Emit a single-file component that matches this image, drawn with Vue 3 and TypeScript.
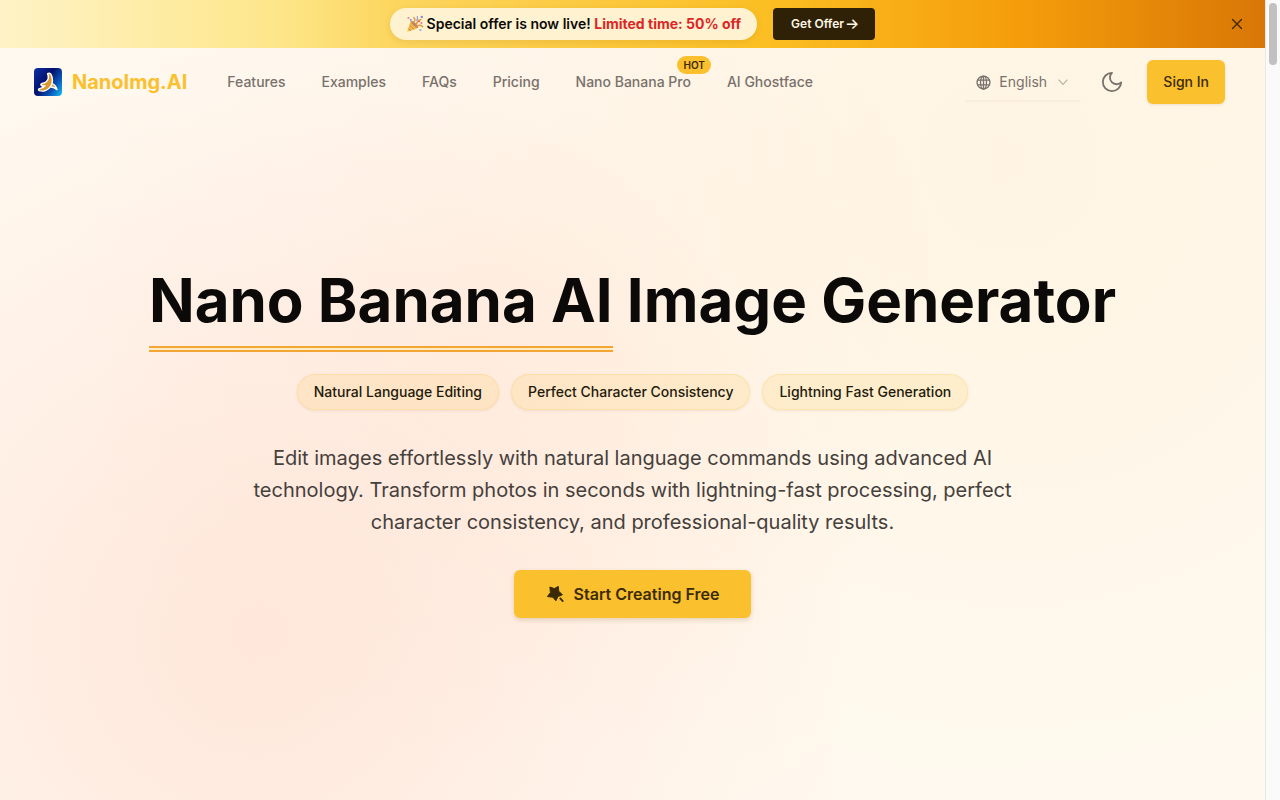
<script setup lang="ts">
import { ref } from 'vue'

interface NavItem {
  label: string
  badge?: string
}

const navItems: NavItem[] = [
  { label: 'Features' },
  { label: 'Examples' },
  { label: 'FAQs' },
  { label: 'Pricing' },
  { label: 'Nano Banana Pro', badge: 'HOT' },
  { label: 'AI Ghostface' },
]

const highlights: string[] = [
  'Natural Language Editing',
  'Perfect Character Consistency',
  'Lightning Fast Generation',
]

const language = ref('English')
const bannerOpen = ref(true)
</script>

<template>
  <div class="window">
    <div class="page">
      <div v-if="bannerOpen" class="banner">
        <div class="banner-content">
          <p class="offer">
            <svg class="party" viewBox="0 0 18 18" aria-hidden="true">
              <path d="M1.2 16.8 4.8 5.8 12.2 13z" fill="#f5b942" />
              <path d="M2.6 13.4 5 16M3.7 10.2l4.6 4.4" stroke="#c98f48" stroke-width="1" />
              <ellipse cx="8.6" cy="9.4" rx="1.5" ry="4.6" transform="rotate(-45 8.6 9.4)" fill="#b98467" />
              <path d="M7.6 7.4C9.4 6 9.2 4.2 7.8 2.6M10.4 9.2c.6-2.4 2-4 4.4-4.6M11 11c2-1 4-.8 5.6.6" fill="none" stroke="#e39a4e" stroke-width="1.5" stroke-linecap="round" />
              <path d="M10.8 5.4c.9-1.1 1-2.4.5-3.8" fill="none" stroke="#8f9fd6" stroke-width="1.3" stroke-linecap="round" />
              <circle cx="2.4" cy="3" r="1.1" fill="#d98a9c" />
              <circle cx="4.8" cy="5" r="1" fill="#8f86cf" />
              <circle cx="15.8" cy="1.9" r="1.2" fill="#8f86cf" />
              <circle cx="15.4" cy="8" r="1" fill="#dd7686" />
              <circle cx="14.4" cy="15" r="1.1" fill="#8fa9d6" />
              <circle cx="13.2" cy="6.6" r=".8" fill="#e2574c" />
            </svg>
            <span>Special offer is now live! <strong>Limited time: 50% off</strong></span>
          </p>
          <button type="button" class="get-offer">Get Offer <span class="arrow">→</span></button>
        </div>
        <button type="button" class="close" aria-label="Close" @click="bannerOpen = false">
          <svg viewBox="0 0 16 16" aria-hidden="true">
            <path d="M3.5 3.5 12.5 12.5M12.5 3.5 3.5 12.5" fill="none" stroke="currentColor" stroke-width="1.3" stroke-linecap="round" />
          </svg>
        </button>
      </div>

      <header class="header">
        <a href="#" class="brand">
          <svg class="logo" viewBox="0 0 28 28" aria-hidden="true">
            <defs>
              <linearGradient id="logo-bg" x1="0" y1="0.2" x2="1" y2="0.9">
                <stop offset="0" stop-color="#0a2a9c" />
                <stop offset="0.4" stop-color="#04116b" />
                <stop offset="0.72" stop-color="#0a55b8" />
                <stop offset="1" stop-color="#12b4ee" />
              </linearGradient>
            </defs>
            <rect width="28" height="28" rx="4" fill="url(#logo-bg)" />
            <path d="M17.4 15.4c3 1 4.8 3 5.6 6.2-1.6-1.6-3.4-2.4-6-2.6" fill="#d9982e" stroke="#fff" stroke-width="1.5" stroke-linejoin="round" stroke-linecap="round" />
            <path d="M13.6 5.6c1.8-.8 3.2-.2 3.9 1.8 1.3 3.6 1.4 7.4-.7 10.8-2.7 4.3-7.6 5.6-11.6 4.4-1-.5-.8-1.6.2-1.9 2.4-.5 4.4-1.6 5.6-3-1.5.4-2.6.3-3.6-.2-.8-.7-.6-1.6.4-1.9 3.6-.6 6-2.6 6.5-5.4.2-1.7-.1-3.2-.7-4.6z" fill="#d9982e" stroke="#fff" stroke-width="1.5" stroke-linejoin="round" />
          </svg>
          <span>NanoImg.AI</span>
        </a>
        <nav class="nav">
          <a v-for="item in navItems" :key="item.label" href="#" class="nav-link">
            {{ item.label }}
            <span v-if="item.badge" class="hot">{{ item.badge }}</span>
          </a>
        </nav>
        <div class="actions">
          <label class="language">
            <svg class="globe" viewBox="0 0 16 16" aria-hidden="true">
              <g fill="none" stroke="currentColor" stroke-width="1.4">
                <circle cx="8" cy="8" r="6.9" />
                <ellipse cx="8" cy="8" rx="3.2" ry="6.9" />
                <path d="M8 1.2v13.6M1.8 5.4h12.4M1.8 10.6h12.4" />
              </g>
            </svg>
            <select v-model="language" aria-label="Language">
              <option>English</option>
            </select>
            <svg class="chevron" viewBox="0 0 12 12" aria-hidden="true">
              <path d="M1.5 3.6 6 8.4l4.5-4.8" fill="none" stroke="currentColor" stroke-width="1.1" />
            </svg>
          </label>
          <button type="button" class="theme" aria-label="Toggle theme">
            <svg viewBox="0 0 24 24" aria-hidden="true">
              <path d="M12 2A7.2 7.2 0 0 0 22 12.4 10 10 0 1 1 12 2z" fill="none" stroke="currentColor" stroke-width="2" stroke-linejoin="round" />
            </svg>
          </button>
          <button type="button" class="sign-in">Sign In</button>
        </div>
      </header>

      <main class="hero">
        <h1><span class="underlined">Nano Banana AI</span> Image Generator</h1>
        <ul class="pills">
          <li v-for="text in highlights" :key="text">{{ text }}</li>
        </ul>
        <p class="lead">
          Edit images effortlessly with natural language commands using advanced AI technology.
          Transform photos in seconds with lightning-fast processing, perfect character
          consistency, and professional-quality results.
        </p>
        <button type="button" class="cta">
          <svg viewBox="0 0 20 20" aria-hidden="true">
            <path d="M12.3 2.4 12.8 7.2 16.4 10.8 11.9 12.6 9.9 16.8 6.9 13.2 1.4 12.6 4.4 8.6 3.9 3 8.4 4.6z" fill="currentColor" stroke="currentColor" stroke-width="1" stroke-linejoin="round" />
            <path d="M13.8 13.8 17.2 17.6" stroke="currentColor" stroke-width="1.8" />
          </svg>
          <span>Start Creating Free</span>
        </button>
      </main>
    </div>
    <div class="scroll-track" aria-hidden="true"><div class="scroll-thumb"></div></div>
  </div>
</template>

<style>
body {
  margin: 0;
}
</style>

<style scoped>
.window {
  display: flex;
  min-height: 100vh;
  font-family: Inter, "Noto Sans", sans-serif;
  color: #0c0a09;
}
button,
select {
  font: inherit;
  color: inherit;
  border: 0;
  padding: 0;
  background: none;
  cursor: pointer;
}
a {
  color: inherit;
  text-decoration: none;
}
svg {
  display: block;
  flex: none;
}
.page {
  flex: 1;
  min-width: 0;
  display: flex;
  flex-direction: column;
  background:
    radial-gradient(circle at 20% 80%, rgba(255, 120, 90, 0.14), transparent 50%),
    radial-gradient(circle at 80% 20%, rgba(255, 205, 110, 0.1), transparent 60%),
    radial-gradient(circle at 40% 40%, rgba(255, 130, 90, 0.05), transparent 50%),
    #fff9f0;
}
.scroll-track {
  box-sizing: border-box;
  width: 15px;
  padding: 3px;
  border-left: 1px solid #e8e8e8;
  background: #fafafa;
}
.scroll-thumb {
  width: 8px;
  height: 62px;
  border-radius: 4px;
  background: #c1c1c1;
}
.banner {
  display: flex;
  align-items: center;
  height: 48px;
  padding-right: 20px;
  background: linear-gradient(90deg, #fef3c7 0%, #fde68a 22%, #fcd65f 31%, #fbbf24 60%, #f59e0b 80%, #d97706 100%);
}
.banner-content {
  flex: 1;
  display: flex;
  justify-content: center;
  align-items: center;
  gap: 16px;
  padding-left: 36px;
}
.offer {
  display: flex;
  align-items: center;
  gap: 3px;
  margin: 0;
  padding: 6px 16px;
  border-radius: 16px;
  background: #fff2d0;
  box-shadow: 0 2px 6px rgba(120, 70, 0, 0.12);
  font-size: 14px;
  font-weight: 600;
  line-height: 20px;
}
.offer strong {
  font-weight: 700;
  color: #dc2626;
}
.party {
  width: 18px;
  height: 18px;
}
.get-offer {
  display: flex;
  align-items: center;
  gap: 1px;
  padding: 8px 16px 8px 18px;
  border-radius: 4px;
  background: #2e2106;
  color: #fff8e6;
  font-size: 12px;
  font-weight: 600;
  line-height: 16px;
}
.arrow {
  font-size: 15px;
  font-weight: 500;
}
.close svg {
  width: 16px;
  height: 16px;
  color: #3a2606;
}
.header {
  display: flex;
  align-items: center;
  padding: 12px 40px 12px 34px;
}
.brand {
  display: flex;
  align-items: center;
  gap: 10px;
  font-size: 20px;
  font-weight: 700;
  color: #fbc02d;
}
.logo {
  width: 28px;
  height: 28px;
}
.nav {
  display: flex;
  gap: 36px;
  margin-left: 40px;
  font-size: 14px;
  font-weight: 500;
  line-height: 20px;
  color: #78716c;
}
.nav-link {
  position: relative;
  white-space: nowrap;
}
.hot {
  position: absolute;
  right: -20px;
  top: -16px;
  padding: 0 6px;
  border-radius: 9px;
  background: #fbc02d;
  color: #3a2a06;
  font-size: 10px;
  font-weight: 600;
  line-height: 18px;
}
.actions {
  display: flex;
  align-items: center;
  margin-left: auto;
}
.language {
  display: flex;
  align-items: center;
  height: 36px;
  padding: 0 12px;
  color: #78716c;
  font-size: 14px;
  box-shadow: 0 3px 2px -1px rgba(120, 90, 40, 0.05);
}
.globe {
  width: 15px;
  height: 15px;
}
.language select {
  appearance: none;
  height: 20px;
  line-height: 20px;
  margin: 0 10px 0 8px;
}
.chevron {
  width: 12px;
  height: 12px;
  color: #b5afa6;
}
.theme {
  margin: 0 24px 0 20px;
  color: #78716c;
}
.theme svg {
  width: 22px;
  height: 22px;
}
.sign-in {
  padding: 12px 16px;
  border-radius: 6px;
  background: #fbc02d;
  box-shadow: 0 1px 3px rgba(120, 80, 0, 0.12);
  color: #3a2a06;
  font-size: 14px;
  font-weight: 500;
  line-height: 20px;
}
.hero {
  flex: 1;
  display: flex;
  flex-direction: column;
  align-items: center;
  justify-content: center;
  padding: 0 24px 36px;
}
h1 {
  margin: 0;
  font-size: 60px;
  font-weight: 700;
  line-height: 76px;
  text-align: center;
}
.underlined {
  position: relative;
}
.underlined::after {
  content: "";
  position: absolute;
  left: 0;
  right: 0;
  bottom: -16px;
  height: 2px;
  border: solid #f3a536;
  border-width: 2px 0;
  background: #fdebc4;
}
.pills {
  display: flex;
  flex-wrap: wrap;
  justify-content: center;
  gap: 12px;
  margin: 36px 0 32px;
  padding: 0;
  list-style: none;
}
.pills li {
  padding: 0 16px;
  border: 1px solid rgba(251, 192, 45, 0.2);
  border-radius: 18px;
  background: rgba(251, 192, 45, 0.14);
  box-shadow: 0 1px 3px rgba(120, 80, 0, 0.1);
  color: #231a0c;
  font-size: 14px;
  font-weight: 500;
  line-height: 34px;
}
.lead {
  max-width: 768px;
  margin: 0 0 32px;
  font-size: 20px;
  line-height: 32px;
  text-align: center;
  color: #44403c;
}
.cta {
  display: flex;
  align-items: center;
  gap: 8px;
  padding: 12px 32px;
  border-radius: 6px;
  background: #fbc02d;
  box-shadow: 0 2px 5px rgba(120, 80, 0, 0.2);
  color: #3a2a06;
  font-size: 16px;
  font-weight: 600;
  line-height: 24px;
}
.cta svg {
  width: 20px;
  height: 20px;
}
</style>
